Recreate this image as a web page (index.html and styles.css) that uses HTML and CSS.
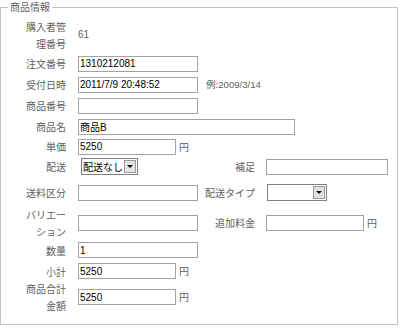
FILE: index.html
```html
<!DOCTYPE html>
<html lang="ja">
<head>
<meta charset="utf-8">
<title>商品情報</title>
<link rel="stylesheet" href="styles.css">
</head>
<body>
<fieldset class="panel">
  <legend class="panel-title">商品情報</legend>
  <div class="form">
    <div class="lbl">購入者管<br>理番号</div>
    <div class="val span3 text">61</div>

    <div class="lbl">注文番号</div>
    <div class="val span3"><input class="field w120" type="text" value="1310212081"></div>

    <div class="lbl">受付日時</div>
    <div class="val span3"><input class="field w120" type="text" value="2011/7/9 20:48:52"><span class="note">例:2009/3/14</span></div>

    <div class="lbl">商品番号</div>
    <div class="val span3"><input class="field w120" type="text" value=""></div>

    <div class="lbl">商品名</div>
    <div class="val span3"><input class="field w217" type="text" value="商品B"></div>

    <div class="lbl">単価</div>
    <div class="val span3"><input class="field w98" type="text" value="5250"><span class="unit">円</span></div>

    <div class="lbl">配送</div>
    <div class="val"><span class="select sel-ship"><span class="select-text">配送なし</span><span class="select-btn"></span></span></div>
    <div class="lbl lbl-r">補足</div>
    <div class="val"><input class="field w122" type="text" value=""></div>

    <div class="lbl">送料区分</div>
    <div class="val"><input class="field w120" type="text" value=""></div>
    <div class="lbl lbl-r">配送タイプ</div>
    <div class="val"><span class="select sel-type"><span class="select-text"></span><span class="select-btn"></span></span></div>

    <div class="lbl">バリエー<br>ション</div>
    <div class="val"><input class="field w120" type="text" value=""></div>
    <div class="lbl lbl-r">追加料金</div>
    <div class="val"><input class="field w98" type="text" value=""><span class="unit">円</span></div>

    <div class="lbl">数量</div>
    <div class="val span3"><input class="field w120" type="text" value="1"></div>

    <div class="lbl">小計</div>
    <div class="val span3"><input class="field w98" type="text" value="5250"><span class="unit">円</span></div>

    <div class="lbl">商品合計<br>金額</div>
    <div class="val span3"><input class="field w98" type="text" value="5250"><span class="unit">円</span></div>
  </div>
</fieldset>
</body>
</html>
```

FILE: styles.css
```css
html, body {
  margin: 0;
  padding: 0;
  background: #fff;
}

body {
  font-family: "Noto Sans CJK JP", "Liberation Sans", sans-serif;
  font-size: 10px;
  color: #5f5f5f;
}

.panel {
  box-sizing: border-box;
  width: 398px;
  margin: 0;
  padding: 2px 0 9px 0;
  border: 1px solid #c4c4c4;
  min-inline-size: 0;
}

.panel-title {
  margin-left: 7px;
  padding: 0 2px;
  font-size: 10px;
  line-height: 14px;
  color: #5f5f5f;
}

.form {
  display: grid;
  grid-template-columns: 77px 122px 66px 1fr;
  grid-template-rows: 37px 21px 21px 21px 21px 19px 21px 31px 29px 26px 16px 36px;
  align-items: center;
}

.lbl {
  text-align: right;
  padding-right: 12px;
  line-height: 17px;
  white-space: nowrap;
}

.lbl-r {
  padding-right: 11px;
}

.val {
  display: flex;
  align-items: center;
  line-height: 16px;
}

.span3 {
  grid-column: 2 / 5;
}

.text {
  font-family: "Liberation Sans", "Noto Sans CJK JP", sans-serif;
  font-size: 10px;
}

.field {
  box-sizing: border-box;
  height: 16px;
  margin: 0;
  padding: 0 1px;
  border: 1px solid #a3a3a3;
  background: #fff;
  color: #000;
  font-family: "Liberation Sans", "Noto Sans CJK JP", sans-serif;
  font-size: 10px;
  outline: none;
}

.w98 { width: 98px; }
.w120 { width: 120px; }
.w122 { width: 122px; }
.w217 { width: 217px; }

.note {
  margin-left: 8px;
  font-family: "Liberation Sans", "Noto Sans CJK JP", sans-serif;
  font-size: 9.6px;
  color: #5f5f5f;
}

.unit {
  margin-left: 3px;
  color: #5f5f5f;
}

.select {
  box-sizing: border-box;
  display: inline-flex;
  align-items: center;
  height: 17px;
  border: 1px solid #808080;
  background: #fff;
}

.sel-ship {
  width: 57px;
  margin-left: 3px;
}

.sel-type {
  width: 60px;
  margin-left: 1px;
}

.select-text {
  flex: 1;
  padding-left: 1px;
  color: #000;
  font-size: 10px;
  line-height: 15px;
  white-space: nowrap;
  overflow: hidden;
}

.select-btn {
  box-sizing: border-box;
  display: flex;
  align-items: center;
  justify-content: center;
  width: 12px;
  height: 13px;
  margin-right: 1px;
  background: #e2e2e2;
  border: 1px solid #9a9a9a;
}

.select-btn::after {
  content: "";
  width: 0;
  height: 0;
  border-left: 3px solid transparent;
  border-right: 3px solid transparent;
  border-top: 3px solid #111;
}
```
